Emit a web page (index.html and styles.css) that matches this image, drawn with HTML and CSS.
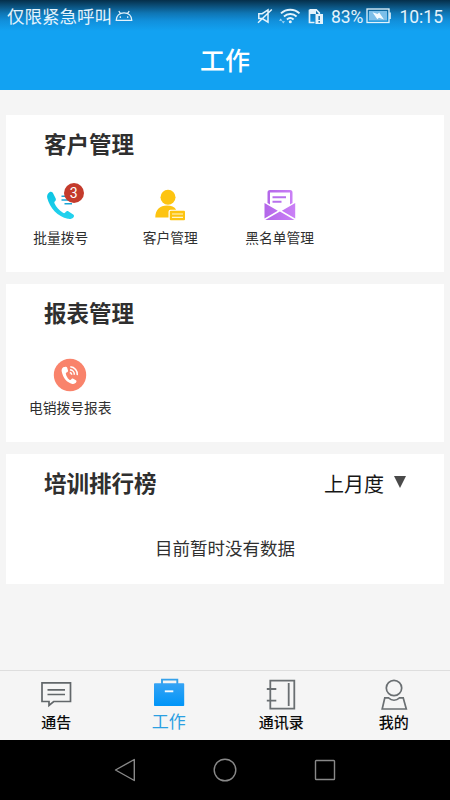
FILE: index.html
```html
<!DOCTYPE html>
<html lang="zh-CN">
<head>
<meta charset="utf-8">
<title>工作</title>
<link rel="stylesheet" href="styles.css">
</head>
<body>
<div class="screen">
  <header class="header">
    <div class="status">
      <span class="carrier">仅限紧急呼叫</span>
      <svg class="droid" width="18" height="12" viewBox="0 0 18 12" fill="none" stroke="#e4f3fc" stroke-width="1.2"><path d="M1.2 10.3C1.2 6 4.4 2.8 9 2.8s7.800 3.200 7.800 7.500zM5.300 3.400 3.800 1M12.700 3.400 14.200 1"/><path d="M5.300 6.300v1.600M12.700 6.300v1.600"/></svg>
      <div class="indicators">
        <svg class="mute" width="16" height="16" viewBox="0 0 16 16" fill="none" stroke="#e4f3fc" stroke-width="1.500"><path d="M1.800 5.700h3.400L11 1.800v12.400L5.200 10.600H1.800zM14.800 1.500 1 14.700"/></svg>
        <svg class="wifi" width="22" height="16" viewBox="0 0 22 16" fill="none" stroke="#e4f3fc" stroke-width="1.900"><path d="M2 5.400c5-4.900 13.500-4.900 18.500 0M4.900 8.500c3.600-3.300 9.200-3.300 12.700 0M7.900 11.500c2-1.800 4.700-1.800 6.700 0"/><circle cx="11.300" cy="13.800" r="1.500" fill="#e4f3fc" stroke="none"/><path d="m0 12.800 1.700-2.300 1.700 2.300zM2.600 13.200H6l-1.700 2.300z" fill="#a5d5f3" stroke="none"/></svg>
        <svg class="sim" width="16" height="17" viewBox="0 0 16 17"><path d="M1.500 1.800h6.800l3 3v3M1.500 1.800v12.700h5" fill="none" stroke="#e4f3fc" stroke-width="1.700"/><path d="M2 2h6v4H2zM7.500 6h7.500v10H7.500z" fill="#e4f3fc"/><path d="M11.200 8v4M11.200 13v1.700" stroke="#247eb6" stroke-width="1.600"/></svg>
        <span class="percent">83%</span>
        <svg class="battery" width="26" height="16" viewBox="0 0 26 16"><rect x="1" y="1" width="22" height="13.500" fill="none" stroke="#e4f3fc" stroke-width="1.300"/><rect x="3" y="3" width="18" height="9.500" fill="#7dbfe9"/><path d="M23.300 4.500h1.500v6.500h-1.500z" fill="#e4f3fc"/><path d="m6.500 4.300 5 1.700 1.700-1.500 4.800 7-5-1.700-1.700 1.500z" fill="#f4fbff"/></svg>
        <span class="clock">10:15</span>
      </div>
    </div>
    <h1 class="title">工作</h1>
  </header>

  <main class="content">
    <section class="card card-customers">
      <h2 class="card-title">客户管理</h2>
      <div class="grid">
        <a class="entry">
          <span class="icon">
            <svg width="32" height="32" viewBox="0 0 32 32"><defs><linearGradient id="phone" x2="0" y2="1"><stop stop-color="#0bc4e2"/><stop offset="1" stop-color="#25d3ef"/></linearGradient></defs><path d="M4.800 3c-2.300 1.300-3.200 3.700-2.500 6.300 2.500 9.700 10.500 18.500 20.500 20.500 2.400.4 4.800-.2 5.900-1.900.6-1 .4-1.800-.5-2.500l-4.600-3c-1-.6-1.900-.5-2.700.3l-.9 1c-.6.600-1.200.6-2 .1-3.800-2.400-6.900-5.900-8.500-9.600-.3-.8-.2-1.400.5-1.900.9-.8 1.100-1.700.7-2.800L8.200 4.600C7.500 2.800 6.300 2.200 4.800 3z" fill="url(#phone)"/><path d="M16.500 7.200h7M16.500 11h8M19.500 14.800h7.500" stroke="#19a5d6" stroke-width="1.500"/></svg>
            <span class="badge">3</span>
          </span>
          <span class="label">批量拨号</span>
        </a>
        <a class="entry">
          <span class="icon"><svg width="32" height="32" viewBox="0 0 32 32" fill="#fdc411"><circle cx="14" cy="8.300" r="7.500"/><path d="M1.300 28.500C1.300 20.500 6 16.500 13 16.500c4.300 0 7.500 1.300 9.200 4.300h-5.700a2 2 0 0 0-2 2v5.700z"/><rect x="15.800" y="21.800" width="15.200" height="9.500" rx="1"/><path d="M18 25h11M18 28.300h11" stroke="#fff5cd" stroke-width="1.200"/></svg></span>
          <span class="label">客户管理</span>
        </a>
        <a class="entry">
          <span class="icon"><svg width="32" height="32" viewBox="0 0 32 32"><defs><linearGradient id="mail" x2="1"><stop stop-color="#b366e9"/><stop offset="1" stop-color="#ca80f6"/></linearGradient></defs><path d="M3.500 14V3.500Q3.500 1 6 1h20q2.500 0 2.500 2.500V14l-2.500 1.500V3.500H6v12z" fill="url(#mail)"/><path d="M8.500 8.200h13.500M8.500 12.800h9" stroke="#b871ed" stroke-width="2"/><path d="M.5 14 13.800 21.700.5 29.500zM31.200 14 17.900 21.700l13.300 7.800zM1.200 31l14.700-8.400L30.500 31z" fill="url(#mail)"/></svg></span>
          <span class="label">黑名单管理</span>
        </a>
      </div>
    </section>

    <section class="card card-reports">
      <h2 class="card-title">报表管理</h2>
      <div class="reports">
        <a class="entry">
          <span class="icon"><svg width="34" height="34" viewBox="0 0 34 34"><circle cx="17" cy="17" r="16.200" fill="#f9836b"/><path d="M10.800 9c-1.700.8-2.500 2.600-2.100 4.600 1.300 6.500 5.300 11.200 10.600 12.300 1.900.3 3.500-.6 4.100-2.100.3-.7.100-1.200-.5-1.600l-2.600-1.500c-.7-.4-1.200-.3-1.700.2l-.8.800c-.4.400-.9.400-1.400.1-2.100-1.700-3.200-4-3.600-6.300 0-.6.200-.9.700-1.100l1-.5c.5-.3.7-.7.500-1.400l-.8-2.700c-.3-1-1.300-1.300-2.400-.8z" fill="#fff"/><g fill="none" stroke="#fff" stroke-width="1.500"><path d="M17.300 8.800c4.300.3 7.500 4 7 8.300M17 11.700c2.700.3 4.500 2.500 4.300 5.100M16.800 14.500c1.200.2 1.900 1 1.900 2.200"/></g></svg></span>
          <span class="label">电销拨号报表</span>
        </a>
      </div>
    </section>

    <section class="card card-ranking">
      <div class="ranking-head">
        <h2 class="card-title">培训排行榜</h2>
        <div class="period"><span>上月度</span><svg width="12" height="12" viewBox="0 0 12 12"><path d="M0 0h12L6 12z" fill="#4a4a4a"/></svg></div>
      </div>
      <p class="empty">目前暂时没有数据</p>
    </section>
  </main>

  <nav class="tabs">
    <a class="tab">
      <svg width="32" height="32" viewBox="0 0 32 32" fill="none" stroke="#62676a" stroke-width="1.700"><path d="M2 4.800h28.500V23.500H13.700L9 27.500v-4H2zM7.500 11.800h17.500M7.500 16.500h17.500"/></svg>
      <span>通告</span>
    </a>
    <a class="tab tab-active">
      <svg width="32" height="32" viewBox="0 0 32 32"><defs><linearGradient id="case" x2="0" y2="1"><stop stop-color="#35a3f4"/><stop offset="1" stop-color="#0095f8"/></linearGradient></defs><path d="M9 6V1.600h15.300V6" fill="none" stroke="#35a1ea" stroke-width="1.900"/><rect x="1" y="5.300" width="30.200" height="22.700" rx=".8" fill="url(#case)"/><path d="M11.800 13.300h8.500" stroke="#f2faff" stroke-width="1.900"/></svg>
      <span>工作</span>
    </a>
    <a class="tab">
      <svg width="32" height="32" viewBox="0 0 32 32" fill="none" stroke="#6a6f72"><path d="M5.300 2.700h24v28h-24z" stroke-width="1.800"/><path d="M23.700 5v23M1.800 11h9.500M1.800 22.700h9.500" stroke-width="1.800"/></svg>
      <span>通讯录</span>
    </a>
    <a class="tab">
      <svg width="32" height="32" viewBox="0 0 32 32" fill="none" stroke="#6a6f72" stroke-width="1.700"><circle cx="16" cy="10" r="7.700"/><path d="M6.800 19.800h3.700c3.300 3 7.700 3 11 0h3.700L28.300 31H4.200z"/></svg>
      <span>我的</span>
    </a>
  </nav>

  <footer class="system-nav">
    <svg width="24" height="24" viewBox="0 0 24 24"><path d="M21.300 1.500v21L2.500 12z"/></svg>
    <svg width="24" height="24" viewBox="0 0 24 24"><circle cx="12" cy="12" r="10.800"/></svg>
    <svg width="24" height="24" viewBox="0 0 24 24"><rect x="2.500" y="2.500" width="19" height="19" rx=".8"/></svg>
  </footer>
</div>
</body>
</html>
```

FILE: styles.css
```css
* { box-sizing: border-box; }
body {
  margin: 0;
  font-family: Roboto, "Noto Sans CJK SC", sans-serif;
  color: #2f2f2f;
}
h1, h2, p { margin: 0; }
svg { display: block; flex: none; }
.screen {
  width: 450px;
  height: 800px;
  display: flex;
  flex-direction: column;
  background: #f5f5f5;
  overflow: hidden;
}
.header {
  height: 90px;
  background: linear-gradient(#052f4a 0, #0a4a72 5px, #0f75b3 13px, #1190dc 21px, #12a2f2 31px);
}
.status {
  display: flex;
  height: 32px;
  align-items: center;
  padding: 0 7px;
  color: #e4f3fc;
  font-size: 17.5px;
  line-height: 32px;
  white-space: nowrap;
}
.carrier { padding-top: 1px; }
.droid { margin-left: 3px; }
.indicators { display: flex; align-items: center; margin-left: auto; }
.wifi { margin-left: 6px; }
.sim { margin-left: 7px; }
.percent { margin-left: 7px; padding-top: 1px; }
.battery { margin-left: 3px; }
.clock { margin-left: 7px; padding-top: 1px; }
.title {
  font-size: 25px;
  font-weight: 500;
  line-height: 60px;
  text-align: center;
  color: #fff;
}
.content {
  flex: 1;
  display: flex;
  flex-direction: column;
  gap: 12px;
  padding: 25px 6px 0;
}
.card { background: #fff; }
.card-customers { height: 157px; }
.card-reports { height: 158px; }
.card-ranking { height: 130px; }
.card-title {
  padding-left: 38px;
  font-size: 22.5px;
  font-weight: 700;
  line-height: 60px;
}
.grid { display: grid; grid-template-columns: repeat(4, 1fr); padding-top: 14px; }
.reports { display: flex; padding: 14px 0 0 23px; }
.entry { display: flex; flex-direction: column; align-items: center; }
.icon { position: relative; }
.label {
  margin-top: 6px;
  font-size: 13.75px;
  line-height: 22px;
  white-space: nowrap;
}
.reports .label { margin-top: 5px; }
.badge {
  position: absolute;
  top: -6px;
  right: -7px;
  width: 20px;
  height: 20px;
  border-radius: 50%;
  background: #c43b2c;
  color: #fff;
  font-size: 14px;
  line-height: 20px;
  text-align: center;
}
.ranking-head { display: flex; justify-content: space-between; padding-right: 38px; }
.period {
  display: flex;
  align-items: center;
  gap: 10px;
  font-size: 20px;
  line-height: 62px;
  color: #171717;
}
.period svg { margin-bottom: 7px; }
.empty { margin-top: 18px; font-size: 17.5px; line-height: 30px; text-align: center; }
.tabs {
  display: grid;
  grid-template-columns: repeat(4, 1fr);
  height: 70px;
  border-top: 1px solid #dedede;
  background: #f5f5f5;
}
.tab {
  display: flex;
  flex-direction: column;
  align-items: center;
  padding-top: 7px;
  font-size: 15px;
  font-weight: 500;
  line-height: 26px;
  color: #0b0b0b;
}
.tab-active { font-size: 17px; font-weight: 400; line-height: 24px; color: #2ba0e2; }
.system-nav {
  height: 60px;
  display: flex;
  justify-content: center;
  align-items: center;
  gap: 76px;
  background: #000;
}
.system-nav svg { fill: none; stroke: #898989; stroke-width: 1.4; stroke-linejoin: round; }
```
